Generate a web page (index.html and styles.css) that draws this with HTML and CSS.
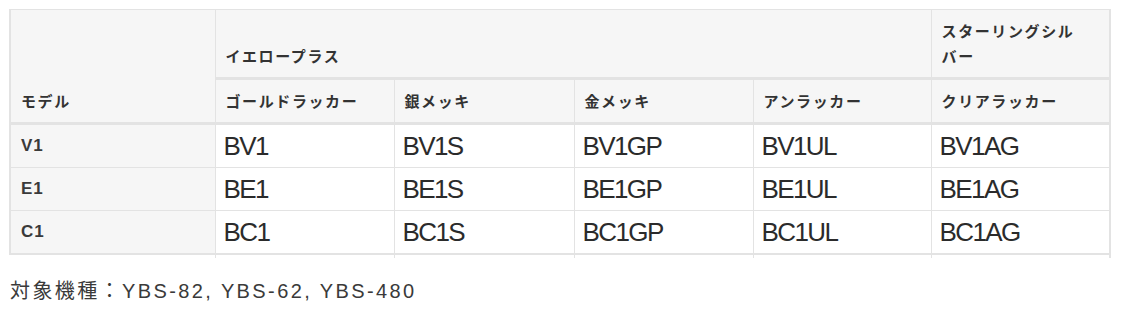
FILE: index.html
```html
<!DOCTYPE html>
<html lang="ja">
<head>
<meta charset="utf-8">
<link rel="stylesheet" href="styles.css">
</head>
<body>
<div class="page">
  <table class="spec">
    <colgroup>
      <col class="c-model">
      <col class="c-a">
      <col class="c-b">
      <col class="c-c">
      <col class="c-d">
      <col class="c-e">
    </colgroup>
    <thead>
      <tr class="hrow1">
        <th rowspan="2" class="corner">モデル</th>
        <th colspan="4">イエロープラス</th>
        <th>スターリングシル<br>バー</th>
      </tr>
      <tr class="hrow2">
        <th>ゴールドラッカー</th>
        <th>銀メッキ</th>
        <th>金メッキ</th>
        <th>アンラッカー</th>
        <th>クリアラッカー</th>
      </tr>
    </thead>
    <tbody>
      <tr>
        <th class="rowhead">V1</th>
        <td>BV1</td><td>BV1S</td><td>BV1GP</td><td>BV1UL</td><td>BV1AG</td>
      </tr>
      <tr>
        <th class="rowhead">E1</th>
        <td>BE1</td><td>BE1S</td><td>BE1GP</td><td>BE1UL</td><td>BE1AG</td>
      </tr>
      <tr class="last">
        <th class="rowhead">C1</th>
        <td>BC1</td><td>BC1S</td><td>BC1GP</td><td>BC1UL</td><td>BC1AG</td>
      </tr>
      <tr class="tail">
        <th></th><td></td><td></td><td></td><td></td><td></td>
      </tr>
    </tbody>
  </table>
  <p class="note">対象機種：YBS-82, YBS-62, YBS-480</p>
</div>
</body>
</html>
```

FILE: styles.css
```css
html, body {
  margin: 0;
  padding: 0;
  background: #ffffff;
}

.page {
  padding: 9px 0 0 9px;
  font-family: "Liberation Sans", "Noto Sans CJK JP", sans-serif;
  color: #333333;
}

.spec {
  border-collapse: collapse;
  table-layout: fixed;
  width: 1100px;
}

.c-model { width: 205px; }
.c-a { width: 179px; }
.c-b { width: 180px; }
.c-c { width: 179px; }
.c-d { width: 178px; }
.c-e { width: 179px; }

.spec th,
.spec td {
  border: 1px solid #e3e3e3;
  text-align: left;
}

.spec thead th {
  background: #f6f6f6;
  font-family: "Noto Sans CJK JP", sans-serif;
  font-weight: 700;
  font-size: 15px;
  letter-spacing: 1.6px;
  line-height: 25px;
  padding: 8px 10px 9px;
  vertical-align: bottom;
  color: #333333;
}

.spec thead .hrow1 th,
.spec thead .hrow2 th {
  border-bottom: 3px solid #e3e3e3;
}

.spec thead .corner {
  border-left-width: 2px;
}

.spec thead tr:first-child th:last-child,
.spec thead .hrow2 th:last-child,
.spec tbody tr td:last-child {
  border-right-width: 2px;
}

.spec .rowhead {
  background: #f6f6f6;
  font-family: "Liberation Sans", "Noto Sans CJK JP", sans-serif;
  font-weight: 700;
  font-size: 17px;
  letter-spacing: 1px;
  padding: 4px 10px;
  vertical-align: middle;
  border-left-width: 2px;
  color: #3a3a3a;
}

.spec td {
  font-family: "Liberation Sans", sans-serif;
  font-size: 26px;
  line-height: 34px;
  letter-spacing: -1.6px;
  padding: 4px 8px;
  vertical-align: middle;
  color: #2b2b2b;
}

.spec .last th,
.spec .last td {
  border-bottom: 2px solid #e3e3e3;
}

.spec .tail th,
.spec .tail td {
  height: 3px;
  padding: 0;
  line-height: 0;
  font-size: 0;
  border-top: none;
  border-bottom: none;
  background: #ffffff;
}

.spec .tail th {
  border: none;
}

.note {
  margin: 17px 0 0 1px;
  font-family: "Liberation Sans", "Noto Sans CJK JP", sans-serif;
  font-size: 20px;
  letter-spacing: 2.4px;
  color: #3a3a3a;
}
```
